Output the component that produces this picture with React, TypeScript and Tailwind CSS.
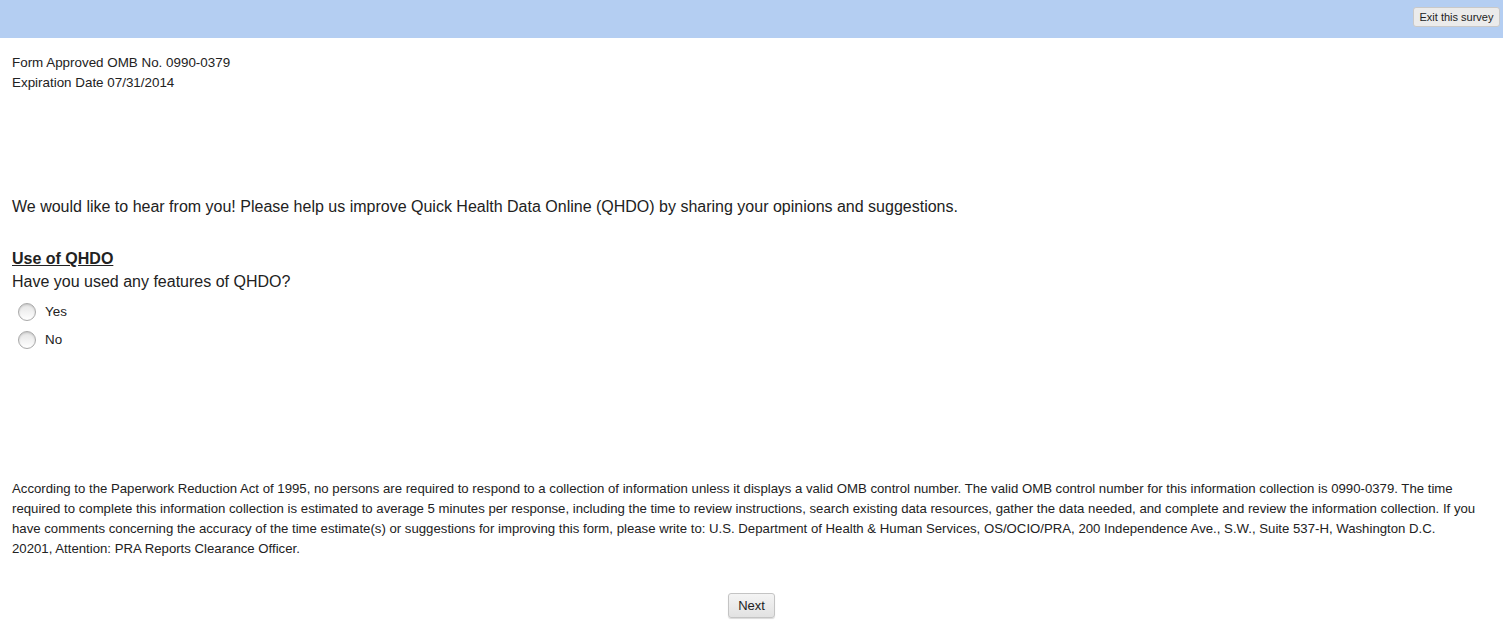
import { useState } from 'react'

const options = ['Yes', 'No']

export default function App() {
  const [choice, setChoice] = useState('')

  return (
    <div className="min-h-[622px] bg-white text-[#222] font-['Liberation_Sans',Arial,sans-serif]">
      {/* top bar */}
      <div className="h-[38px] bg-[#b4cef2] flex justify-end items-start pt-[7px] pr-[3px]">
        <button className="h-[20px] w-[87px] text-[11px] text-[#222] bg-[#ebebeb] border border-[#c9c9c9] rounded-[3px]">
          Exit this survey
        </button>
      </div>

      <div className="px-[12px]">
        <div className="pt-[15px] text-[13.4px] leading-[20px]">
          <p>Form Approved OMB No. 0990-0379</p>
          <p>Expiration Date 07/31/2014</p>
        </div>

        <p className="mt-[104px] text-[16px] leading-[20px]">
          We would like to hear from you! Please help us improve Quick Health Data Online (QHDO) by sharing your opinions and suggestions.
        </p>

        {/* question */}
        <div className="mt-[32px]">
          <h3 className="text-[16px] leading-[20px] font-bold underline">Use of QHDO</h3>
          <p className="mt-[3px] text-[16px] leading-[20px]">Have you used any features of QHDO?</p>
          <div className="mt-[11px] flex flex-col gap-[10px] pl-[6px]">
            {options.map((o) => (
              <label key={o} className="flex items-center gap-[9px] cursor-pointer" onClick={() => setChoice(o)}>
                <span className="w-[18px] h-[18px] rounded-full border border-[#a9a9a9] bg-gradient-to-b from-[#e4e4e4] to-white shadow-[inset_0_1px_2px_rgba(0,0,0,0.15)] flex items-center justify-center">
                  {choice === o && <span className="w-[8px] h-[8px] rounded-full bg-[#333]" />}
                </span>
                <span className="text-[13.4px] leading-[18px]">{o}</span>
              </label>
            ))}
          </div>
        </div>

        <p className="mt-[130px] text-[13.2px] leading-[20px]">
          According to the Paperwork Reduction Act of 1995, no persons are required to respond to a collection of information unless it displays a valid OMB control number. The valid OMB control number for this information collection is 0990-0379. The time required to complete this information collection is estimated to average 5 minutes per response, including the time to review instructions, search existing data resources, gather the data needed, and complete and review the information collection. If you have comments concerning the accuracy of the time estimate(s) or suggestions for improving this form, please write to: U.S. Department of Health &amp; Human Services, OS/OCIO/PRA, 200 Independence Ave., S.W., Suite 537-H, Washington D.C.
          <br />
          20201, Attention: PRA Reports Clearance Officer.
        </p>

        <div className="mt-[34px] flex justify-center pb-[5px]">
          <button className="h-[25px] w-[47px] text-[13px] text-[#222] bg-gradient-to-b from-[#f4f4f4] to-[#e2e2e2] border border-[#c4c4c4] rounded-[3px] shadow-[0_1px_1px_rgba(0,0,0,0.15)]">
            Next
          </button>
        </div>
      </div>
    </div>
  )
}
